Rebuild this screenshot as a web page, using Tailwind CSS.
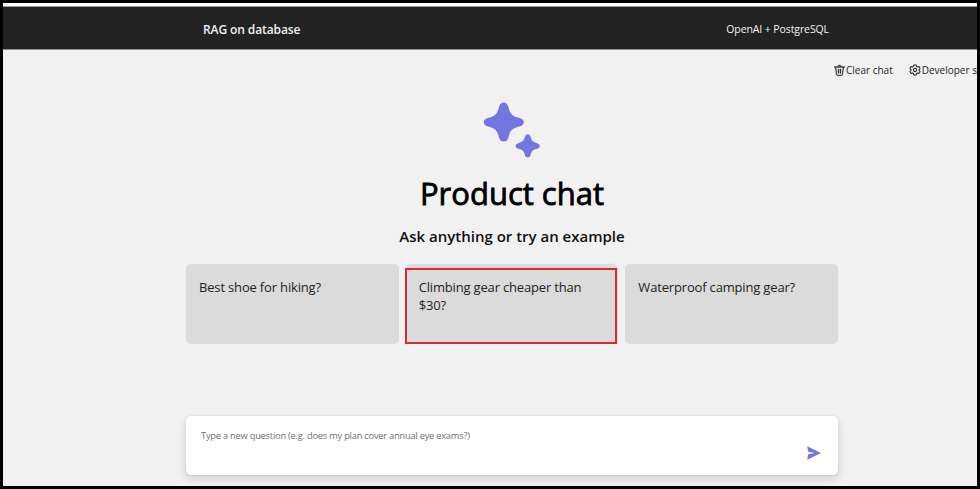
<!DOCTYPE html>
<html lang="en">
<head>
<meta charset="utf-8">
<title>Product chat</title>
<script src="https://cdn.jsdelivr.net/npm/@tailwindcss/browser@4"></script>
</head>
<body class="h-[489px] w-[980px] overflow-hidden bg-black font-['Open_Sans','Noto_Sans',sans-serif]">
<div class="flex h-[489px] w-[980px] flex-col overflow-hidden border-[3px] border-black bg-[#f1f1f1]">
  <header class="h-[47px] shrink-0 border-t-[3px] border-b border-t-white border-b-[#909090] bg-[#222222]">
    <div class="flex h-[43px] items-center justify-between border-t border-[#999] pt-[4px] pr-[148px] pl-[200px] whitespace-nowrap text-[#f2f2f2]">
      <h3 class="text-[12px] font-semibold tracking-[-0.1px]">RAG on database</h3>
      <h4 class="text-[10.5px] tracking-[-0.1px]">OpenAI + PostgreSQL</h4>
    </div>
  </header>
  <div class="flex h-[42px] shrink-0 items-center gap-[16px] pb-[2px] pl-[830px] text-[10px] whitespace-nowrap text-[#242424]">
    <button class="flex shrink-0 items-center">
      <svg class="size-[13px]" viewBox="0 0 20 20" fill="currentColor"><path d="M8.5 4h3a1.5 1.5 0 0 0-3 0Zm-1 0a2.500 2.500 0 0 1 5 0h5a.5.5 0 0 1 0 1.200h-1.050l-1.200 10.340A3 3 0 0 1 12.270 18H7.730a3 3 0 0 1-2.980-2.460L3.550 5.200H2.500a.5.5 0 0 1 0-1.200h5ZM5.900 15.200A2 2 0 0 0 7.730 16.800h4.540a2 2 0 0 0 1.830-1.600L15.300 5.200H4.700L5.900 15.200ZM8.500 7.500c.4 0 .7.220.7.500v6c0 .28-.3.500-.7.500s-.7-.22-.7-.5V8c0-.28.300-.5.700-.5Zm3.700.5c0-.28-.3-.5-.7-.5s-.7.220-.7.500v6c0 .28.300.5.700.5s.7-.22.700-.5V8Z" stroke="currentColor" stroke-width=".5"/></svg>
      <span>Clear chat</span>
    </button>
    <button class="flex shrink-0 items-center gap-px">
      <svg class="size-[12px]" viewBox="0 0 20 20" fill="none" stroke="currentColor" stroke-width="1.700" stroke-linejoin="round"><path d="M8 1.800 Q10 1.200 12 1.800 L12.500 4.200 L14.100 5.100 L16.400 4.300 Q17.900 5.800 18.400 7.700 L16.600 9.200 V10.800 L18.400 12.300 Q17.900 14.200 16.400 15.700 L14.100 14.900 L12.500 15.800 L12 18.200 Q10 18.800 8 18.200 L7.500 15.800 L5.900 14.900 L3.600 15.700 Q2.100 14.200 1.600 12.300 L3.400 10.800 V9.200 L1.600 7.700 Q2.100 5.800 3.600 4.300 L5.900 5.100 L7.500 4.200 Z"/><circle cx="10" cy="10" r="2.700"/></svg>
      <span>Developer settings</span>
    </button>
  </div>
  <main class="ml-[183px] flex w-[652px] grow flex-col items-center">
    <svg class="mt-[7px] h-[60px] w-[60px] shrink-0" viewBox="0 -0.4 60 60" fill="#7376e1"><path d="M21.700 3C24.200 3 25.600 4.700 26.400 7.500C28.200 14.500 30.200 16.600 37 18.400C40 19.200 41.800 20.500 41.800 22.800S40 26.400 37 27.200C30.200 29 28.200 31.100 26.400 38.100C25.600 41 24.200 42.200 21.700 42.200S17.800 41 17 38.100C15.200 31.100 13.200 29 6.400 27.200C3.400 26.400 1.800 25.100 1.800 22.800S3.400 19.200 6.400 18.400C13.200 16.600 15.200 14.500 17 7.500C17.800 4.700 19.200 3 21.700 3Z"/><path d="M45.700 34.900C47.300 34.900 48.100 36 48.600 37.700C49.500 41.300 50.900 42.700 54.500 43.500C56.500 44 57.800 45 57.800 46.500S56.500 49 54.500 49.500C50.900 50.300 49.500 51.700 48.600 55.300C48.100 57 47.300 58.100 45.700 58.100S43.300 57 42.800 55.300C41.900 51.700 40.500 50.300 36.900 49.500C34.900 49 33.600 48 33.600 46.500S34.900 44 36.900 43.500C40.500 42.700 41.900 41.300 42.800 37.700C43.300 36 44.100 34.900 45.700 34.900Z"/></svg>
    <h1 class="mt-[12px] text-[31px] leading-[44px] font-medium whitespace-nowrap text-black [-webkit-text-stroke:0.8px_#000]">Product chat</h1>
    <h2 class="mt-[9px] text-[15px] leading-[24px] font-semibold whitespace-nowrap text-[#111]">Ask anything or try an example</h2>
    <ul class="mt-[16px] grid h-[80px] w-full shrink-0 grid-cols-3 gap-[7px] text-[13px] leading-[18px] tracking-[-0.17px] text-[#222]">
      <li class="rounded-[5px] bg-[#dbdbdb] px-[13px] pt-[14px]">Best shoe for hiking?</li>
      <li class="relative rounded-[5px] bg-[#dbdbdb] px-[13px] pt-[14px]">Climbing gear cheaper than<br>$30?<span class="absolute top-[4px] right-px bottom-0 -left-px border-2 border-[#dc2832]"></span></li>
      <li class="rounded-[5px] bg-[#dbdbdb] px-[13px] pt-[14px]">Waterproof camping gear?</li>
    </ul>
    <div class="mt-[72px] flex h-[59px] w-full shrink-0 justify-between rounded-[5px] bg-white pr-[16px] pl-[15px] shadow-[0_4px_8px_rgba(0,0,0,0.14),0_0_2px_rgba(0,0,0,0.12)]">
      <span class="pt-[13px] text-[9.300px] leading-[14px] tracking-[-0.230px] whitespace-nowrap text-[#707070]">Type a new question (e.g. does my plan cover annual eye exams?)</span>
      <svg class="mt-[30px] h-[14px] w-[16px]" viewBox="0 0 16 14" fill="#7376e1"><path d="M1.200.3 15 7 1.200 13.700 2.200 8.200 9 7 2.200 5.800Z"/></svg>
    </div>
  </main>
</div>
</body>
</html>
